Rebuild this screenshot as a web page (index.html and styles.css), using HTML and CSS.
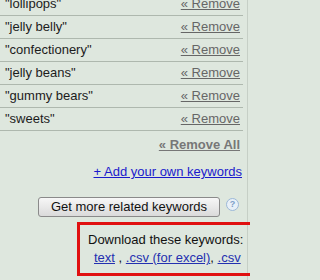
FILE: index.html
```html
<!DOCTYPE html>
<html>
<head>
<meta charset="utf-8">
<link rel="stylesheet" href="styles.css">
</head>
<body>
<div class="page">
  <div class="list">
    <div class="row"><span class="kw">"lollipops"</span><a class="rm" href="#">« Remove</a></div>
    <div class="row"><span class="kw">"jelly belly"</span><a class="rm" href="#">« Remove</a></div>
    <div class="row"><span class="kw">"confectionery"</span><a class="rm" href="#">« Remove</a></div>
    <div class="row"><span class="kw">"jelly beans"</span><a class="rm" href="#">« Remove</a></div>
    <div class="row"><span class="kw">"gummy bears"</span><a class="rm" href="#">« Remove</a></div>
    <div class="row"><span class="kw">"sweets"</span><a class="rm" href="#">« Remove</a></div>
  </div>
  <div class="remove-all"><a href="#">« Remove All</a></div>
  <div class="add"><a href="#">+ Add your own keywords</a></div>
  <div class="btn-row">
    <button class="btn">Get more related keywords</button>
    <span class="help">?</span>
  </div>
  <div class="download">
    <div class="dl-title">Download these keywords:</div>
    <div class="dl-links"><a href="#">text</a> , <a href="#">.csv (for excel)</a>, <a href="#">.csv</a></div>
  </div>
</div>
</body>
</html>
```

FILE: styles.css
```css
html, body {
  margin: 0;
  padding: 0;
  background: #dee7de;
}
body {
  width: 250px;
  height: 280px;
  overflow: hidden;
  font-family: "Liberation Sans", Arial, sans-serif;
  font-size: 13px;
  color: #1c1c1c;
}
.page {
  display: flex;
  flex-direction: column;
  width: 247px;
  height: 280px;
  border-right: 1px solid #c6cfc6;
}
.list {
  margin-top: -7px;
  width: 243px;
}
.row {
  display: flex;
  justify-content: space-between;
  align-items: center;
  height: 22px;
  line-height: 22px;
  padding: 0 3px 0 5px;
  border-bottom: 1px solid #aeb8ae;
}
.rm {
  color: #666;
  text-decoration: underline;
}
.remove-all {
  width: 240px;
  text-align: right;
  line-height: 16px;
  margin-top: 6px;
}
.remove-all a {
  color: #777;
  font-weight: bold;
  text-decoration: underline;
}
.add {
  width: 242px;
  text-align: right;
  line-height: 16px;
  margin-top: 11px;
}
.add a {
  color: #1a1acc;
  text-decoration: underline;
}
.btn-row {
  display: flex;
  align-items: flex-start;
  justify-content: flex-end;
  gap: 6px;
  width: 239px;
  margin-top: 17px;
  height: 20px;
}
.btn {
  width: 182px;
  height: 20px;
  padding: 0;
  font-family: "Liberation Sans", Arial, sans-serif;
  font-size: 13px;
  color: #111;
  background: linear-gradient(#f7f7f7, #dadada);
  border: 1px solid #8a8a8a;
  border-radius: 3px;
  line-height: 18px;
}
.help {
  width: 11px;
  height: 11px;
  margin-top: 1px;
  border: 1px solid #9cb8d8;
  border-radius: 50%;
  background: #e8f0f8;
  color: #7f9fc8;
  font-size: 9px;
  font-weight: bold;
  line-height: 11px;
  text-align: center;
}
.download {
  margin-top: 5px;
  margin-left: 77px;
  width: 200px;
  flex: none;
  border: 3px solid #e01010;
  padding: 7px 0 7px 8px;
  white-space: nowrap;
  line-height: 16px;
  color: #111;
}
.dl-links {
  padding-left: 6px;
  margin-top: 2px;
}
.dl-links a {
  color: #2430b0;
  text-decoration: underline;
}
```
